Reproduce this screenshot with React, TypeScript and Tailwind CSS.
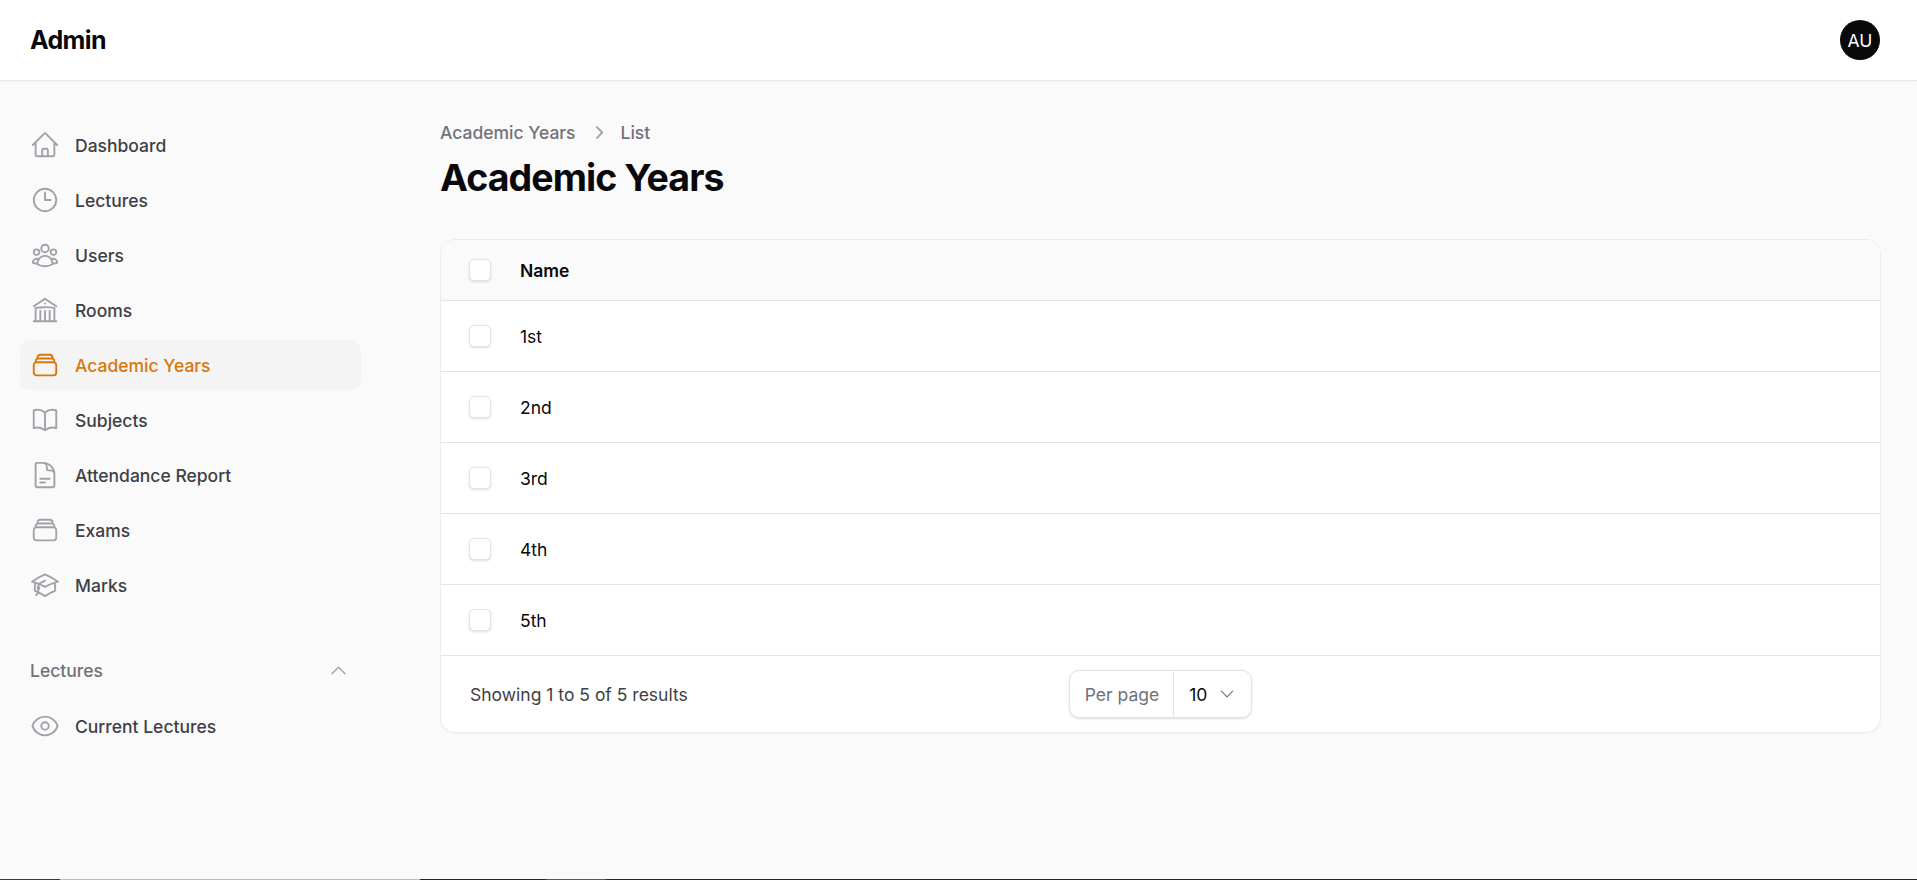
import {
  HiMiniChevronRight,
  HiOutlineAcademicCap,
  HiOutlineBookOpen,
  HiOutlineBuildingLibrary,
  HiOutlineChevronDown,
  HiOutlineChevronUp,
  HiOutlineClock,
  HiOutlineDocumentText,
  HiOutlineEye,
  HiOutlineHome,
  HiOutlineRectangleStack,
  HiOutlineUserGroup,
} from "react-icons/hi2";

const navItems = [
  { label: "Dashboard", icon: HiOutlineHome },
  { label: "Lectures", icon: HiOutlineClock },
  { label: "Users", icon: HiOutlineUserGroup },
  { label: "Rooms", icon: HiOutlineBuildingLibrary },
  { label: "Academic Years", icon: HiOutlineRectangleStack, active: true },
  { label: "Subjects", icon: HiOutlineBookOpen },
  { label: "Attendance Report", icon: HiOutlineDocumentText },
  { label: "Exams", icon: HiOutlineRectangleStack },
  { label: "Marks", icon: HiOutlineAcademicCap },
];

const years = ["1st", "2nd", "3rd", "4th", "5th"];

function Checkbox() {
  return (
    <span className="block h-[22px] w-[22px] rounded-[5px] border border-[#e4e4e7] bg-white shadow-sm" />
  );
}

export default function App() {
  return (
    <div className="flex h-[880px] flex-col overflow-hidden bg-[#fafafa] font-['Inter',sans-serif] text-[17.5px] leading-[25px] text-[#09090b]">
      {/* Top bar */}
      <header className="flex h-[81px] shrink-0 items-center justify-between border-b border-[#e8e8ea] bg-white pl-[30px] pr-[37px] shadow-[0_1px_2px_0_rgba(0,0,0,0.03)]">
        <div className="text-[25px] font-bold leading-none tracking-tight">Admin</div>
        <div className="flex h-10 w-10 items-center justify-center rounded-full bg-[#09090b] text-[17.5px] text-white">
          AU
        </div>
      </header>

      <div className="flex min-h-0 flex-1">
        {/* Sidebar */}
        <aside className="w-[376px] shrink-0 pl-5 pr-[15px] pt-[39px]">
          <nav className="flex flex-col gap-[5px]">
            {navItems.map((item) => (
              <a
                key={item.label}
                className={
                  item.active
                    ? "flex h-[50px] items-center gap-[15px] rounded-[10px] bg-[#f4f4f5] px-[10px] font-medium text-[#d97706]"
                    : "flex h-[50px] items-center gap-[15px] rounded-[10px] px-[10px] font-medium text-[#3f3f46]"
                }
              >
                <item.icon
                  className={item.active ? "h-[30px] w-[30px] text-[#d97706]" : "h-[30px] w-[30px] text-[#a1a1aa]"}
                />
                {item.label}
              </a>
            ))}
          </nav>

          <div className="mt-[45px] flex h-[30px] items-center justify-between pl-[10px] pr-[12px] font-medium text-[#71717a]">
            <span>Lectures</span>
            <HiOutlineChevronUp className="h-[21px] w-[21px] text-[#a1a1aa]" />
          </div>

          <div className="mt-[16px]">
            <a className="flex h-[50px] items-center gap-[15px] rounded-[10px] px-[10px] font-medium text-[#3f3f46]">
              <HiOutlineEye className="h-[30px] w-[30px] text-[#a1a1aa]" />
              Current Lectures
            </a>
          </div>
        </aside>

        {/* Main */}
        <main className="min-w-0 flex-1 pr-[36px] pl-[64px] pt-[39px]">
          <div className="flex h-[24px] items-center gap-[10px] font-medium text-[#71717a]">
            <span>Academic Years</span>
            <HiMiniChevronRight className="h-[25px] w-[25px] text-[#a1a1aa]" />
            <span>List</span>
          </div>
          <h1 className="mt-[11px] text-[37.5px] font-bold leading-[45px] tracking-tight text-[#09090b]">
            Academic Years
          </h1>

          <div className="mt-[39px] overflow-hidden rounded-[15px] border border-[#ececed] bg-white shadow-[0_1px_2px_0_rgba(0,0,0,0.03)]">
            <div className="flex h-[61px] items-center gap-[29px] border-b border-[#e4e4e7] bg-[#fafafa] pl-[28px] font-semibold">
              <Checkbox />
              <span>Name</span>
            </div>
            {years.map((year) => (
              <div key={year} className="flex h-[71px] items-center gap-[29px] border-b border-[#e4e4e7] pl-[28px]">
                <Checkbox />
                <span>{year}</span>
              </div>
            ))}
            <div className="grid h-[76px] grid-cols-[1fr_auto_1fr] items-center px-[29px]">
              <span className="text-[#3f3f46]">Showing 1 to 5 of 5 results</span>
              <div className="flex h-[48px] items-center rounded-[10px] border border-[#e4e4e7] bg-white shadow-sm">
                <span className="flex h-full items-center border-r border-[#e4e4e7] pl-[15px] pr-[14px] text-[#71717a]">Per page</span>
                <span className="flex w-[77px] items-center justify-between pl-[15px] pr-[15px]">
                  10
                  <HiOutlineChevronDown className="h-[18px] w-[18px] text-[#71717a]" />
                </span>
              </div>
              <span />
            </div>
          </div>
        </main>
      </div>

      {/* Window edge along the bottom of the capture */}
      <div className="flex h-px shrink-0 bg-[#1e2a2e]">
        <span className="w-[60px] bg-[#24423c]" />
        <span className="w-[360px] bg-[#bdbdbd]" />
        <span className="w-[126px]" />
        <span className="w-[60px] bg-[#555a5c]" />
      </div>
    </div>
  );
}
